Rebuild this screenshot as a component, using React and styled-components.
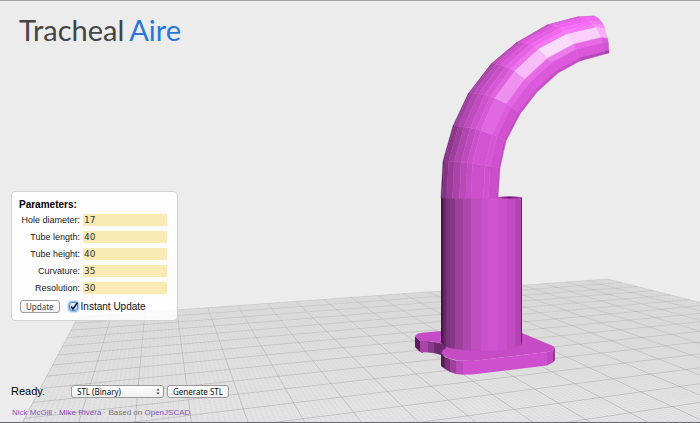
import React, { useState } from "react";
import styled, { createGlobalStyle } from "styled-components";

const GlobalStyle = createGlobalStyle`
  *, *::before, *::after { box-sizing: border-box; }
  body {
    margin: 0;
    background: #ececec;
    color: #000;
    font-family: "Liberation Sans", Helvetica, Arial, sans-serif;
  }
`;

const Page = styled.div`
  position: relative;
  min-height: 100vh;
  display: flex;
  flex-direction: column;
  border-top: 1px solid #a3a3a3;
  border-bottom: 1px solid #66666c;
`;

const Viewport = styled.svg`
  position: absolute;
  inset: 0;
  width: 100%;
  height: 100%;
`;

const Header = styled.header`
  position: relative;
  flex: 1;
  padding: 12px 19px;
`;

const Logo = styled.h1`
  margin: 0;
  display: flex;
  gap: 5px;
  font: 400 29px/34px Lato, sans-serif;
  color: #444;
`;

const LogoAccent = styled.span`
  color: #2a75d8;
`;

const Panel = styled.form`
  position: relative;
  align-self: flex-start;
  margin-left: 11px;
  padding: 7px 10px 7px 7px;
  border: 1px solid #d2d2d2;
  border-radius: 4px;
  background: rgba(255, 255, 255, 0.86);
`;

const PanelTitle = styled.h2`
  margin: 0 0 3px;
  font-size: 10px;
  line-height: 12px;
`;

const Fields = styled.div`
  display: grid;
  grid-template-columns: 61px 84px;
  column-gap: 3px;
  row-gap: 5px;
  align-items: center;
`;

const FieldLabel = styled.label`
  font-size: 9px;
  line-height: 12px;
  text-align: right;
  color: #222;
`;

const FieldInput = styled.input`
  width: 100%;
  height: 12px;
  padding: 0 1px;
  border: 0;
  background: #faebb5;
  color: #333;
  font: 9px/12px "DejaVu Sans", sans-serif;
`;

const Actions = styled.div`
  display: flex;
  align-items: center;
  gap: 9px;
  margin: 6px 0 0 1px;
`;

const Button = styled.button`
  height: 13px;
  padding: 0 5px;
  border: 1px solid #9a9a9a;
  border-radius: 3px;
  background: linear-gradient(#fff, #f0f0f0);
  color: ${(p) => (p.$muted ? "#444" : "#111")};
  font: 8px/10px "Noto Sans", sans-serif;
`;

const CheckLabel = styled.label`
  display: flex;
  align-items: center;
  gap: 3px;
  font-size: 10px;
  line-height: 13px;
  color: #111;
`;

const CheckBox = styled.span`
  position: relative;
  display: flex;
`;

const CheckInput = styled.input`
  appearance: none;
  width: 9px;
  height: 9px;
  margin: 0;
  border: 1px solid #5a8cc4;
  border-radius: 3px;
  background: linear-gradient(#e8f3fd, #a9d0f3);
  box-shadow: 0 0 2px 1px #6fa8e4;
`;

const CheckMark = styled.svg`
  position: absolute;
  inset: 0;
  width: 100%;
  height: 100%;
  overflow: visible;
  pointer-events: none;
`;

const StatusBar = styled.div`
  position: relative;
  display: flex;
  align-items: center;
  margin: 64px 11px 0;
`;

const Status = styled.output`
  width: 60px;
  font-size: 11px;
  line-height: 13px;
`;

const SelectWrap = styled.span`
  position: relative;
  display: flex;
  margin-right: 3px;
`;

const Select = styled.select`
  appearance: none;
  width: 93px;
  height: 13px;
  padding: 0 5px;
  border: 1px solid #9a9a9a;
  border-radius: 3px;
  background: linear-gradient(#fff, #f0f0f0);
  color: #111;
  font: 8px/10px "Noto Sans", sans-serif;
`;

const SelectArrows = styled.svg`
  position: absolute;
  right: 4px;
  top: 3px;
  width: 4px;
  height: 7px;
  pointer-events: none;
`;

const Credits = styled.footer`
  position: relative;
  padding: 10px 12px 4px;
  font-size: 8px;
  line-height: 10px;
  color: #777;
`;

const CreditLink = styled.a`
  color: #8a50bc;
  text-decoration: none;
`;

/* ---- build plate ---- */

const PLATE = 20;

function project(u, v) {
  const w = 1 + 0.015 * u - 0.04 * v;
  const x = (78 + 35.6 * u - 6.32 * v) / w;
  const y = (317 + 2.285 * u - 6.6 * v) / w;
  return `${x.toFixed(1)} ${y.toFixed(1)}`;
}

function gridPath(step, skip) {
  let d = "";
  for (let i = 0; i <= PLATE * step; i += 1) {
    if (skip && i % step === 0) continue;
    const k = i / step;
    d += `M${project(k, 0)}L${project(k, PLATE)}M${project(0, k)}L${project(PLATE, k)}`;
  }
  return d;
}

const plateOutline = `M${project(0, 0)}L${project(PLATE, 0)}L${project(PLATE, PLATE)}L${project(0, PLATE)}Z`;

/* ---- bent tube: each ring runs from the outer edge to the inner edge ---- */

const RINGS = [
  [[441, 198], [470, 199], [498, 198]],
  [[443, 161], [471, 162], [500, 168]],
  [[453, 126], [480, 127], [506, 141]],
  [[468, 94], [494, 91], [520, 114]],
  [[491, 64], [514, 63], [537, 92]],
  [[516, 43], [539, 39], [558, 73]],
  [[547, 25], [569, 24], [580, 61]],
  [[577, 17], [600, 18], [605, 54]],
  [[594, 16], [608, 21], [609, 53]],
];

const SHADES = [
  ["#56205a", "#853385", "#9a3c9a", "#ab43ab", "#b949b9", "#c64dc6", "#cc50cc", "#cf50cf", "#cc4dcc", "#c04ac0"],
  ["#6a2a6e", "#8c368c", "#9c3f9c", "#b046b0", "#bf4bbf", "#cb50cb", "#d354d3", "#d555d5", "#d050d0", "#c44bc4"],
  ["#74306f", "#a040a0", "#b147b1", "#bf4dbf", "#cc53cc", "#d65ad6", "#e068e0", "#dc5cdc", "#d250d2", "#c44bc4"],
  ["#803084", "#ab44ab", "#bd4bbd", "#ca50ca", "#d658d6", "#e063e0", "#ee90ee", "#e466e4", "#da58da", "#c94dc9"],
  ["#963c96", "#bb4abb", "#cd51cd", "#da57da", "#e562e5", "#ed72ed", "#f8bdf8", "#e56be5", "#dd58dd", "#c84cc8"],
  ["#a342a3", "#cc50cc", "#db57db", "#e65de6", "#f068f0", "#f478f0", "#fbdcfb", "#ec7bec", "#de58de", "#c94dc9"],
  ["#bd4dbd", "#da57da", "#e85ee8", "#f263f2", "#f66cf6", "#f678f6", "#fad0fa", "#e868e8", "#da57da", "#b846b8"],
  ["#d858d8", "#e85ee8", "#ee62ee", "#f26af2", "#f478f4", "#f58af5", "#f5b0f5", "#dc5cdc", "#d052d0", "#a33fa3"],
];

const STOPS = [0, 0.02, 0.1, 0.2, 0.32, 0.43, 0.52, 0.74, 0.83, 0.96, 1];

function ringPoint([a, b, c], t) {
  const s = 1 - t;
  const at = (i) => (s * s * a[i] + 2 * s * t * b[i] + t * t * c[i]).toFixed(1);
  return `${at(0)},${at(1)}`;
}

function BentTube() {
  return (
    <g strokeWidth="0.4" strokeLinejoin="round">
      {SHADES.map((row, seg) =>
        row.map((color, i) => (
          <polygon
            key={`${seg}-${i}`}
            fill={color}
            stroke={color}
            points={[
              ringPoint(RINGS[seg], STOPS[i]),
              ringPoint(RINGS[seg], STOPS[i + 1]),
              ringPoint(RINGS[seg + 1], STOPS[i + 1]),
              ringPoint(RINGS[seg + 1], STOPS[i]),
            ].join(" ")}
          />
        ))
      )}
    </g>
  );
}

const COLUMN = [
  [441, 443, "#411741"], [443, 446, "#642764"], [446, 450, "#7c327c"],
  [450, 455, "#873787"], [455, 463, "#9c409c"], [463, 471, "#ad47ad"],
  [471, 481, "#be4dbe"], [481, 488, "#cb50cb"], [488, 497, "#d053d0"],
  [497, 507, "#cb50cb"], [507, 515, "#c04cc0"], [515, 521, "#b446b4"],
  [521, 522, "#642364"],
];

function columnBottom(x) {
  const k = (x - 481.5) / 40.5;
  return 343 + 8 * Math.sqrt(Math.max(0, 1 - k * k));
}

function Column() {
  return (
    <g>
      {COLUMN.map(([x1, x2, color]) => (
        <polygon
          key={x1}
          fill={color}
          points={`${x1},198 ${x2},198 ${x2},${columnBottom(x2)} ${x1},${columnBottom(x1)}`}
        />
      ))}
      <path d="M497 197.500Q510 195.500 522 197.500Q510 200 497 197.500Z" fill="#5b1c5b" stroke="#c34ac3" strokeWidth="0.6" />
    </g>
  );
}

function BasePlate() {
  return (
    <g>
      <path d="M415 336L420 341V352L415 347Z" fill="#5a1f5a" />
      <path d="M420 341L423 341.500V353L420 352Z" fill="#7c317c" />
      <path d="M420 341L428 341L428 352.500L420 352Z" fill="#a844a8" />
      <path d="M428 341L434 342L434 353L428 352.500Z" fill="#8c398c" />
      <path d="M434 342L440 343L447 347L441 355L434 353Z" fill="#702b70" />
      <path d="M415 336L418 333.500L424 332.500L442 331L522 333L553 346L555 348L553 350.500L547 352L472 361L458 360.500L448 358L441 354L443 350L448 347L443 344L436 342L428 341L420 341Z" fill="#c54cc5" />
      <path d="M441 353L445 357V369L441 366Z" fill="#552055" />
      <path d="M445 357L450 359V372L445 369Z" fill="#7a317a" />
      <path d="M450 359L456 360.500V374L450 372Z" fill="#9f409f" />
      <path d="M456 360.500L463 361V374.700L456 374Z" fill="#bb4abb" />
      <path d="M463 361L472 361L547 352V365.500L472 374.500L463 374.700Z" fill="#cf50cf" />
      <path d="M547 352L553 350.500V362.500L547 365.500Z" fill="#bd4abd" />
      <path d="M553 350.500L555 348V360L553 362.500Z" fill="#923a92" />
    </g>
  );
}

function Scene() {
  return (
    <Viewport viewBox="0 0 700 423" preserveAspectRatio="xMidYMid slice" aria-hidden="true">
      <defs>
        <linearGradient id="plate" gradientUnits="userSpaceOnUse" x1="0" y1="279" x2="0" y2="423">
          <stop offset="0" stopColor="#dedede" />
          <stop offset="0.500" stopColor="#e3e3e3" />
          <stop offset="1" stopColor="#e8e8e8" />
        </linearGradient>
        <linearGradient id="minor" gradientUnits="userSpaceOnUse" x1="0" y1="279" x2="0" y2="423">
          <stop offset="0" stopColor="#888" stopOpacity="0.04" />
          <stop offset="1" stopColor="#888" stopOpacity="0.18" />
        </linearGradient>
        <linearGradient id="major" gradientUnits="userSpaceOnUse" x1="0" y1="279" x2="0" y2="423">
          <stop offset="0" stopColor="#777" stopOpacity="0.25" />
          <stop offset="1" stopColor="#777" stopOpacity="0.6" />
        </linearGradient>
      </defs>
      <path d={plateOutline} fill="url(#plate)" />
      <path d={gridPath(10, true)} fill="none" stroke="url(#minor)" strokeWidth="0.5" />
      <path d={gridPath(1, false)} fill="none" stroke="url(#major)" strokeWidth="0.6" />
      <BasePlate />
      <Column />
      <BentTube />
    </Viewport>
  );
}

const PARAMETERS = [
  ["hole", "Hole diameter:", "17"],
  ["length", "Tube length:", "40"],
  ["height", "Tube height:", "40"],
  ["curvature", "Curvature:", "35"],
  ["resolution", "Resolution:", "30"],
];

export default function App() {
  const [instant, setInstant] = useState(true);
  return (
    <Page>
      <GlobalStyle />
      <Scene />
      <Header>
        <Logo>
          <span>Tracheal</span>
          <LogoAccent>Aire</LogoAccent>
        </Logo>
      </Header>
      <Panel onSubmit={(e) => e.preventDefault()}>
        <PanelTitle>Parameters:</PanelTitle>
        <Fields>
          {PARAMETERS.map(([id, label, value]) => (
            <React.Fragment key={id}>
              <FieldLabel htmlFor={id}>{label}</FieldLabel>
              <FieldInput id={id} defaultValue={value} />
            </React.Fragment>
          ))}
        </Fields>
        <Actions>
          <Button type="submit" $muted>Update</Button>
          <CheckLabel>
            <CheckBox>
              <CheckInput type="checkbox" checked={instant} onChange={(e) => setInstant(e.target.checked)} />
              {instant && (
                <CheckMark viewBox="0 0 9 9">
                  <path d="M2 4.500L4 7L8.500 0.500" fill="none" stroke="#10182c" strokeWidth="1.500" />
                </CheckMark>
              )}
            </CheckBox>
            Instant Update
          </CheckLabel>
        </Actions>
      </Panel>
      <StatusBar>
        <Status>Ready.</Status>
        <SelectWrap>
          <Select aria-label="Output format" defaultValue="stlb">
            <option value="stlb">STL (Binary)</option>
          </Select>
          <SelectArrows viewBox="0 0 4 7">
            <path d="M0.500 2.500L2 0.500L3.500 2.500ZM0.500 4.500L2 6.500L3.500 4.500Z" fill="#333" />
          </SelectArrows>
        </SelectWrap>
        <Button type="button">Generate STL</Button>
      </StatusBar>
      <Credits>
        <CreditLink href="#nick">Nick McGill</CreditLink> · <CreditLink href="#mike">Mike Rivera</CreditLink> · Based on{" "}
        <CreditLink href="#openjscad">OpenJSCAD</CreditLink>
      </Credits>
    </Page>
  );
}
